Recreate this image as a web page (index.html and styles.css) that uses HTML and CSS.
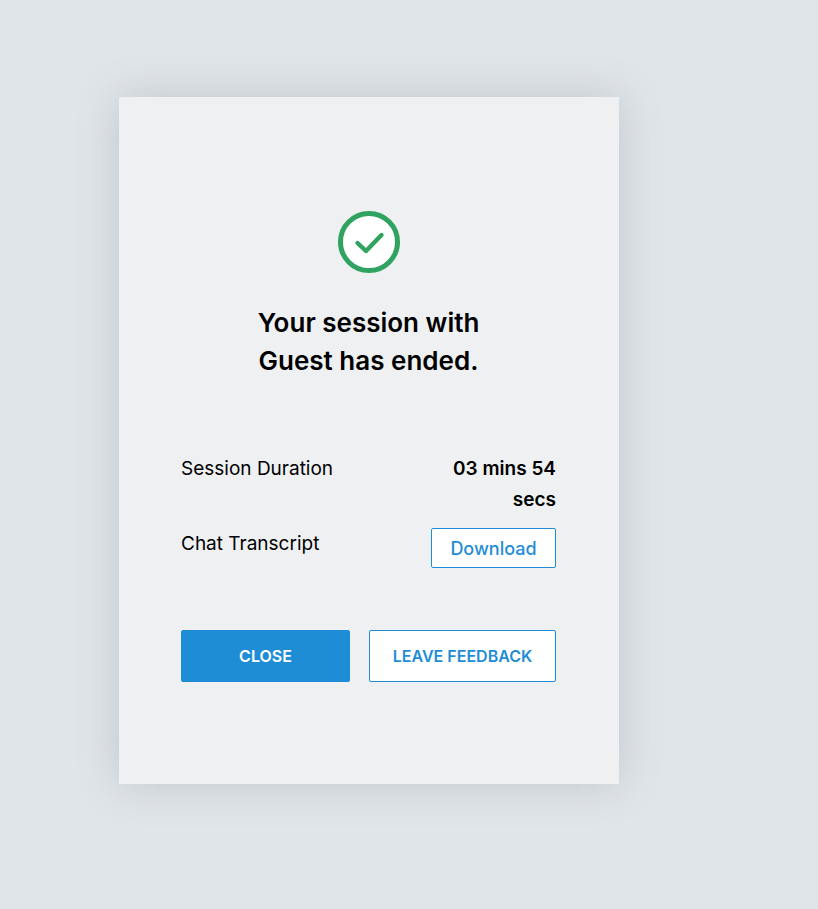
FILE: index.html
```html
<!DOCTYPE html>
<html lang="en">
<head>
    <meta charset="UTF-8">
    <meta name="viewport" content="width=device-width, initial-scale=1.0">
    <title>Session ended</title>
    <link rel="stylesheet" href="styles.css">
</head>
<body>
    <div class="card">
        <svg class="check-icon" width="64" height="64" viewBox="0 0 64 64">
            <circle cx="32" cy="32" r="28.5" fill="#fff" stroke="#2fa35f" stroke-width="5"/>
            <path d="M20.5 33 L29 41 L44.5 25" fill="none" stroke="#2fa35f" stroke-width="4.4" stroke-linecap="round" stroke-linejoin="round"/>
        </svg>
        <h1 class="title">Your session with<br>Guest has ended.</h1>

        <div class="details">
            <div class="detail-row">
                <div class="detail-label">Session Duration</div>
                <div class="detail-value">03 mins 54 secs</div>
            </div>
            <div class="detail-row">
                <div class="detail-label">Chat Transcript</div>
                <div class="detail-value"><button class="btn-download">Download</button></div>
            </div>
        </div>

        <div class="actions">
            <button class="btn btn-close">CLOSE</button>
            <button class="btn btn-feedback">LEAVE FEEDBACK</button>
        </div>
    </div>
</body>
</html>
```

FILE: styles.css
```css
body {
    font-family: Inter, "Liberation Sans", sans-serif;
    margin: 0;
    min-height: 909px;
    background-color: #e0e5e9;
    color: #000;
}

.card {
    box-sizing: border-box;
    width: 500px;
    height: 687px;
    margin: 97px 0 0 119px;
    padding: 113px 63px 0 62px;
    background-color: #eef0f2;
    box-shadow: 0 0 40px rgba(80, 90, 100, 0.22);
}

.check-icon {
    display: block;
    margin: 0 auto;
}

.title {
    margin: 30px 0 0;
    font-size: 26px;
    font-weight: 600;
    line-height: 38px;
    text-align: center;
}

.details {
    margin-top: 73px;
}

.detail-row {
    display: flex;
    justify-content: space-between;
    margin-bottom: 13px;
}

.detail-label {
    font-size: 19px;
    line-height: 31px;
}

.detail-value {
    width: 125px;
    font-size: 19px;
    font-weight: 600;
    line-height: 31px;
    text-align: right;
}

.btn-download {
    display: block;
    box-sizing: border-box;
    width: 125px;
    height: 40px;
    padding: 0;
    background-color: #fff;
    border: 1px solid #1f8dd6;
    border-radius: 2px;
    color: #1f8dd6;
    font-family: inherit;
    font-size: 18px;
    font-weight: 500;
}

.actions {
    display: flex;
    justify-content: space-between;
    margin-top: 62px;
}

.btn {
    box-sizing: border-box;
    height: 52px;
    padding: 0;
    border: 1px solid #1f8dd6;
    border-radius: 2px;
    font-family: inherit;
    font-size: 16px;
    font-weight: 600;
}

.btn-close {
    width: 169px;
    background-color: #1f8dd6;
    color: #fff;
}

.btn-feedback {
    width: 187px;
    background-color: #fff;
    color: #1f8dd6;
}
```
